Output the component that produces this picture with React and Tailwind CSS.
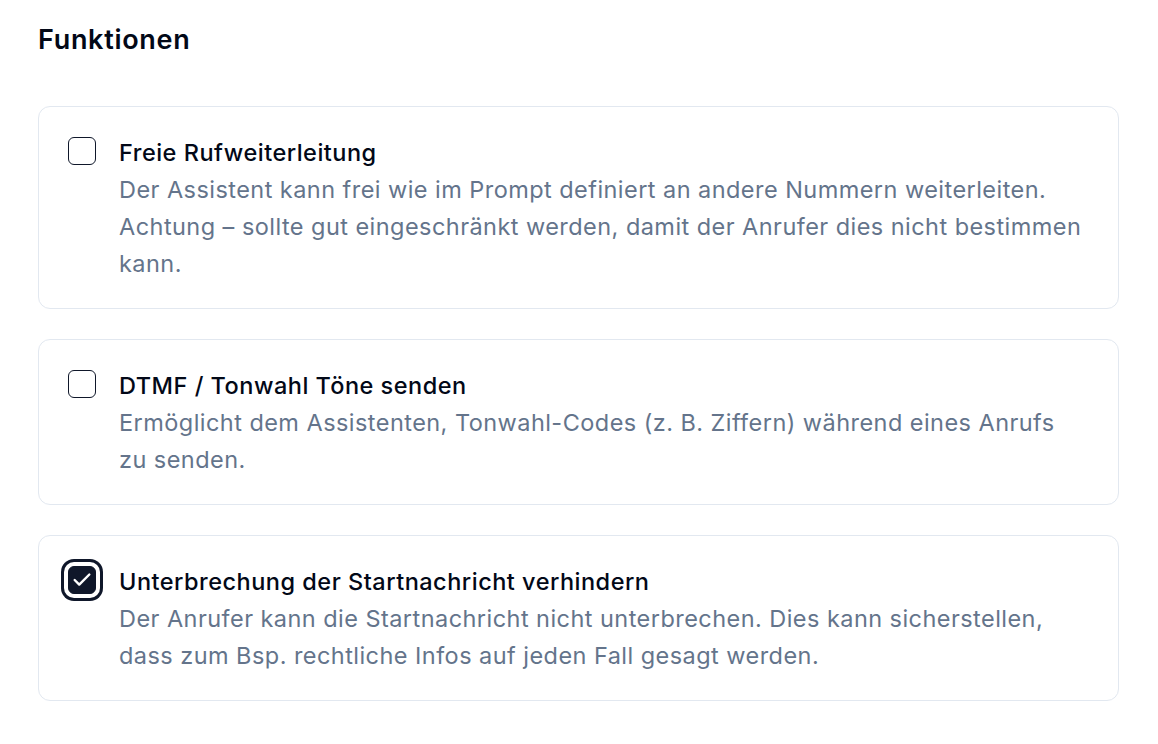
import { useState } from "react";

const FEATURES = [
  {
    id: "forward",
    title: "Freie Rufweiterleitung",
    text: "Der Assistent kann frei wie im Prompt definiert an andere Nummern weiterleiten. Achtung – sollte gut eingeschränkt werden, damit der Anrufer dies nicht bestimmen kann.",
    checked: false,
  },
  {
    id: "dtmf",
    title: "DTMF / Tonwahl Töne senden",
    text: "Ermöglicht dem Assistenten, Tonwahl-Codes (z. B. Ziffern) während eines Anrufs zu senden.",
    checked: false,
  },
  {
    id: "nointerrupt",
    title: "Unterbrechung der Startnachricht verhindern",
    text: "Der Anrufer kann die Startnachricht nicht unterbrechen. Dies kann sicherstellen, dass zum Bsp. rechtliche Infos auf jeden Fall gesagt werden.",
    checked: true,
    focused: true,
  },
];

function Box({ checked, focused, onClick }) {
  return <button onClick={onClick} role="checkbox" aria-checked={checked} className={`mt-[3px] flex h-[28px] w-[28px] shrink-0 items-center justify-center rounded-[6px] border-[1.5px] border-[#0f172a] ${checked ? "bg-[#0f172a]" : "bg-white"} ${focused ? "ring-[3px] ring-[#0f172a] ring-offset-[4px] ring-offset-white" : ""}`}>
      {checked && <svg className="h-[22px] w-[22px] text-white" viewBox="0 0 24 24" fill="none"><path d="M20 6L9 17l-5-5" stroke="currentColor" strokeWidth="2.6" strokeLinecap="round" strokeLinejoin="round" /></svg>}
    </button>;
}

export default function App() {
  const [items, setItems] = useState(FEATURES);
  function toggle(id) {
    setItems(items.map(f => f.id === id ? { ...f, checked: !f.checked } : f));
  }
  return <div className="min-h-screen bg-white px-[38px] pt-[22px] text-[#020817]" style={{ fontFamily: "Inter, 'Noto Sans', sans-serif" }}>
      <h2 className="text-[27px] font-semibold leading-[36px] tracking-[0.7px]">Funktionen</h2>
      <div className="mt-[48px] flex w-[1081px] flex-col gap-[30px]">
        {items.map(f => <div key={f.id} className="flex gap-[23px] rounded-[12px] border border-[#e2e8f0] px-[29px] pb-[26px] pt-[27px]">
            <Box checked={f.checked} focused={f.focused} onClick={() => toggle(f.id)} />
            <div className="flex-1">
              <p className="text-[23.5px] font-medium leading-[37px] tracking-[0.5px]">{f.title}</p>
              <p className="text-[23.5px] leading-[37px] tracking-[0.45px] text-[#64748b]">{f.text}</p>
            </div>
          </div>)}
      </div>
    </div>;
}
